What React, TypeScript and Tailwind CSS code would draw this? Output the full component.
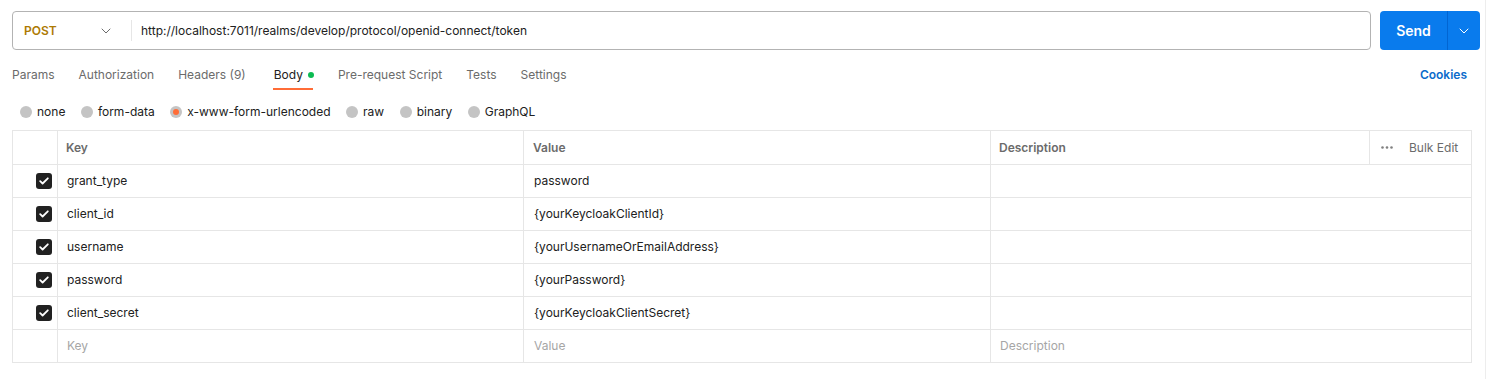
import React from 'react';

const rows = [
  { key: 'grant_type', value: 'password' },
  { key: 'client_id', value: '{yourKeycloakClientId}' },
  { key: 'username', value: '{yourUsernameOrEmailAddress}' },
  { key: 'password', value: '{yourPassword}' },
  { key: 'client_secret', value: '{yourKeycloakClientSecret}' },
];

const tabs = ['Params', 'Authorization', 'Headers (9)', 'Body', 'Pre-request Script', 'Tests', 'Settings'];
const bodyTypes = ['none', 'form-data', 'x-www-form-urlencoded', 'raw', 'binary', 'GraphQL'];

const Chevron = ({ className }: { className?: string }) => (
  <svg width="10" height="6" viewBox="0 0 10 6" fill="none" className={className}>
    <path d="M1 1l4 4 4-4" stroke="currentColor" strokeWidth="1" strokeLinecap="round" strokeLinejoin="round" />
  </svg>
);

const Checkbox = () => (
  <span className="flex h-4 w-4 items-center justify-center rounded-[3px] bg-[#212121]">
    <svg width="10" height="8" viewBox="0 0 10 8" fill="none">
      <path d="M1.2 4.2l2.4 2.3L8.8 1.3" stroke="white" strokeWidth="1.8" strokeLinecap="round" strokeLinejoin="round" />
    </svg>
  </span>
);

export default function App() {
  return (
    <div className="h-[379px] w-[1489px] bg-white font-['Inter',sans-serif] text-[12px] text-[#212121]">
      <div className="flex h-full w-[1486px] flex-col border-r border-[#ededed] pl-3 pr-[5px] pt-[11px]">
        {/* URL bar */}
        <div className="flex h-[39px] gap-[9px]">
          <div className="flex flex-1 items-center rounded-[4px] border border-[#b3b3b3]">
            <div className="flex w-[118px] items-center pl-[11px]">
              <span className="w-[77px] font-semibold text-[#ad7a03]">POST</span>
              <Chevron className="text-[#6b6b6b]" />
            </div>
            <div className="h-[21px] w-px bg-[#e6e6e6]" />
            <span className="pl-[9px] text-[#212121]">http://localhost:7011/realms/develop/protocol/openid-connect/token</span>
          </div>
          <div className="flex w-[100px] items-stretch overflow-hidden rounded-[4px] bg-[#097bed] text-white">
            <span className="flex w-[67px] items-center justify-center text-[14px] font-semibold">Send</span>
            <span className="w-px bg-[#0265d2]" />
            <span className="flex flex-1 items-center justify-center">
              <Chevron />
            </span>
          </div>
        </div>

        {/* Tabs */}
        <div className="mt-[12px] flex h-[30px] items-start justify-between pr-[13px]">
          <div className="flex gap-[24px]">
            {tabs.map(t => (
              <div key={t} className={`flex flex-col ${t === 'Body' ? 'ml-[4px]' : ''}`}>
                <span className={`flex h-[26px] items-center gap-[5px] ${t === 'Body' ? 'text-[#212121]' : 'text-[#6b6b6b]'}`}>
                  {t}
                  {t === 'Body' && <span className="h-[6px] w-[6px] rounded-full bg-[#0cbb52]" />}
                </span>
                {t === 'Body' && <span className="-ml-[1px] h-[2px] w-[40px] bg-[#ff6c37]" />}
              </div>
            ))}
          </div>
          <span className="flex h-[26px] items-center font-semibold text-[#0b6bcb]">Cookies</span>
        </div>

        {/* Body types */}
        <div className="mt-[9px] flex h-[22px] items-center gap-[15.5px] pl-[8px]">
          {bodyTypes.map(b => (
            <label key={b} className="flex items-center gap-[5px] text-[#212121]">
              <span className="flex h-[12px] w-[12px] items-center justify-center rounded-full bg-[#c4c4c4]">
                {b === 'x-www-form-urlencoded' && <span className="h-[6px] w-[6px] rounded-full bg-[#ff6c37]" />}
              </span>
              {b}
            </label>
          ))}
        </div>

        {/* Table */}
        <div className="mt-[7px] w-[1460px] border border-[#e6e6e6]">
          <div className="flex h-[33px] font-semibold text-[#6b6b6b]">
            <div className="w-[45px] border-r border-[#e6e6e6]" />
            <div className="flex w-[466px] items-center border-r border-[#e6e6e6] pl-[8px]">Key</div>
            <div className="flex w-[467px] items-center border-r border-[#e6e6e6] pl-[9px]">Value</div>
            <div className="flex w-[379px] items-center border-r border-[#e6e6e6] pl-[8px]">Description</div>
            <div className="flex flex-1 items-center gap-[16px] pl-[11px] font-normal">
              <svg width="12" height="3" viewBox="0 0 12 3" className="text-[#808080]">
                <circle cx="1.5" cy="1.5" r="1.3" fill="currentColor" />
                <circle cx="6" cy="1.5" r="1.3" fill="currentColor" />
                <circle cx="10.5" cy="1.5" r="1.3" fill="currentColor" />
              </svg>
              <span className="text-[#6b6b6b]">Bulk Edit</span>
            </div>
          </div>
          {rows.map(r => (
            <div key={r.key} className="flex h-[33px] border-t border-[#e6e6e6]">
              <div className="flex w-[45px] items-center justify-end border-r border-[#e6e6e6] pr-[5px]">
                <Checkbox />
              </div>
              <div className="flex w-[466px] items-center border-r border-[#e6e6e6] pl-[9px]">{r.key}</div>
              <div className="flex w-[467px] items-center border-r border-[#e6e6e6] pl-[10px]">{r.value}</div>
              <div className="flex-1" />
            </div>
          ))}
          <div className="flex h-[33px] border-t border-[#e6e6e6] text-[#a6a6a6]">
            <div className="w-[45px] border-r border-[#e6e6e6]" />
            <div className="flex w-[466px] items-center border-r border-[#e6e6e6] pl-[9px]">Key</div>
            <div className="flex w-[467px] items-center border-r border-[#e6e6e6] pl-[10px]">Value</div>
            <div className="flex flex-1 items-center pl-[9px]">Description</div>
          </div>
        </div>
      </div>
    </div>
  );
}
